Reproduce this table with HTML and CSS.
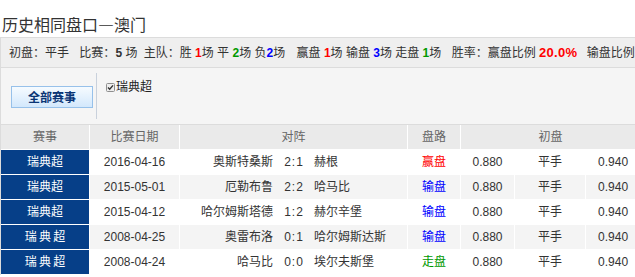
FILE: index.html
```html
<!DOCTYPE html>
<html lang="zh-CN">
<head>
<meta charset="utf-8">
<title>历史相同盘口</title>
<link rel="stylesheet" href="styles.css">
</head>
<body>
<div class="page">
  <div class="panel">
    <h2 class="title">历史相同盘口—澳门</h2>
    <div class="box">
      <div class="summary">
        <span class="item gap7">初盘：平手</span>
        <span class="item gap3">比赛：<b class="num">5</b> 场</span>
        <span class="item gap8">主队：胜 <b class="num red">1</b>场 平 <b class="num green">2</b>场 负<b class="num blue">2</b>场</span>
        <span class="item gap7">赢盘 <b class="num red">1</b>场 输盘 <b class="num blue">3</b>场 走盘 <b class="num green">1</b>场</span>
        <span class="item gap6">胜率：赢盘比例 <b class="rate">20.0%</b></span>
        <span class="item">输盘比例</span>
      </div>
      <div class="filter">
        <div class="filter-left">
          <button class="all-btn" type="button">全部赛事</button>
        </div>
        <div class="filter-right">
          <label class="check">
            <svg class="check-box" width="9" height="9" viewBox="0 0 9 9" aria-hidden="true">
              <rect x="0.5" y="0.5" width="8" height="8" rx="1" fill="#eeeeee" stroke="#8f8f8f"/>
              <path d="M2 4.6 L3.7 6.3 L7 2.4" fill="none" stroke="#333" stroke-width="1.4"/>
            </svg>瑞典超
          </label>
        </div>
      </div>
      <table class="matches">
        <colgroup>
          <col class="w-league"><col class="w-date"><col class="w-home"><col class="w-score"><col class="w-away"><col class="w-result"><col class="w-odds"><col class="w-line"><col class="w-odds2">
        </colgroup>
        <thead>
          <tr><th>赛事</th><th>比赛日期</th><th colspan="3">对阵</th><th>盘路</th><th colspan="3">初盘</th></tr>
        </thead>
        <tbody>
          <tr>
            <td class="league">瑞典超</td><td>2016-04-16</td>
            <td class="home">奥斯特桑斯</td><td class="score">2:1</td><td class="away">赫根</td>
            <td class="red">赢盘</td><td>0.880</td><td>平手</td><td>0.940</td>
          </tr>
          <tr class="alt">
            <td class="league">瑞典超</td><td>2015-05-01</td>
            <td class="home">厄勒布鲁</td><td class="score">2:2</td><td class="away">哈马比</td>
            <td class="blue">输盘</td><td>0.880</td><td>平手</td><td>0.940</td>
          </tr>
          <tr>
            <td class="league">瑞典超</td><td>2015-04-12</td>
            <td class="home">哈尔姆斯塔德</td><td class="score">1:2</td><td class="away">赫尔辛堡</td>
            <td class="blue">输盘</td><td>0.880</td><td>平手</td><td>0.940</td>
          </tr>
          <tr class="alt">
            <td class="league spaced">瑞 典 超</td><td>2008-04-25</td>
            <td class="home">奥雷布洛</td><td class="score">0:1</td><td class="away">哈尔姆斯达斯</td>
            <td class="blue">输盘</td><td>0.880</td><td>平手</td><td>0.940</td>
          </tr>
          <tr>
            <td class="league spaced">瑞 典 超</td><td>2008-04-24</td>
            <td class="home">哈马比</td><td class="score">0:0</td><td class="away">埃尔夫斯堡</td>
            <td class="green">走盘</td><td>0.880</td><td>平手</td><td>0.940</td>
          </tr>
        </tbody>
      </table>
    </div>
  </div>
</div>
</body>
</html>
```

FILE: styles.css
```css
html, body {
  margin: 0;
  padding: 0;
  background: #fff;
  overflow: hidden;
}

.page {
  width: 635px;
  overflow: hidden;
  font-family: "Liberation Sans", "Noto Sans CJK SC", sans-serif;
  font-size: 12px;
  color: #333;
}

.panel {
  width: 641px;
}

.title {
  margin: 0;
  padding: 12px 0 1px 2px;
  font-family: "Noto Sans CJK SC", sans-serif;
  font-size: 16px;
  font-weight: normal;
  line-height: 24px;
  color: #333;
}

.box {
  border-left: 1px solid #dcdcdc;
}

.summary {
  border-top: 1px solid #dcdcdc;
  border-bottom: 1px solid #dcdcdc;
  background: #efefef;
  height: 29px;
  line-height: 29px;
  padding-left: 8px;
  white-space: nowrap;
  overflow: hidden;
}

.item { display: inline-block; }
.gap3 { margin-right: 3px; }
.gap6 { margin-right: 6px; }
.gap7 { margin-right: 7px; }
.gap8 { margin-right: 8px; }

.num {
  font-weight: bold;
  font-size: 12px;
}

.rate {
  font-weight: bold;
  font-size: 13px;
  letter-spacing: 0.3px;
  color: #f00;
}

.red { color: #f00; }
.green { color: #009900; }
.blue { color: #0000ff; }

.filter {
  display: flex;
  height: 56px;
  background: #f5f5f5;
  border-bottom: 1px solid #dcdcdc;
}

.filter-left {
  display: flex;
  align-items: center;
  padding: 0 3px 0 10px;
  margin: 5px 0;
  border-right: 1px solid #c9d1dc;
}

.all-btn {
  width: 82px;
  height: 22px;
  margin-top: 2px;
  padding: 0;
  border: 1px solid #97c1ea;
  background: linear-gradient(#f6fbff, #d3e8fc);
  color: #0b3575;
  font-family: "Noto Sans CJK SC", sans-serif;
  font-size: 12px;
  font-weight: bold;
  line-height: 20px;
}

.filter-right {
  padding: 11px 0 0 9px;
}

.check {
  display: flex;
  align-items: center;
  line-height: 16px;
  color: #222;
}

.check-box {
  margin-right: 1px;
}

.matches {
  width: 640px;
  table-layout: fixed;
  border-collapse: separate;
  border-spacing: 0;
}

.w-league { width: 89px; }
.w-date { width: 90px; }
.w-home { width: 98px; }
.w-score { width: 32px; }
.w-away { width: 98px; }
.w-result { width: 53px; }
.w-odds { width: 54px; }
.w-line { width: 71px; }
.w-odds2 { width: 55px; }

.matches th,
.matches td {
  height: 24px;
  padding: 0;
  line-height: 24px;
  text-align: center;
  white-space: nowrap;
  border-right: 1px solid #fff;
  border-bottom: 1px solid #fff;
  font-size: 12px;
}

.matches th {
  background: #eaeaea;
  color: #666;
  font-weight: normal;
}

.matches tr.alt td {
  background: #f4f4f4;
}

.matches td.league,
.matches tr.alt td.league {
  background: #063f88;
  color: #fff;
}

.matches td.spaced {
  word-spacing: -1px;
}

.matches td.home {
  text-align: right;
  padding-right: 5px;
  border-right: 0;
}

.matches td.score {
  letter-spacing: 1px;
  border-right: 0;
}

.matches td.away {
  text-align: left;
  padding-left: 4px;
}
```
